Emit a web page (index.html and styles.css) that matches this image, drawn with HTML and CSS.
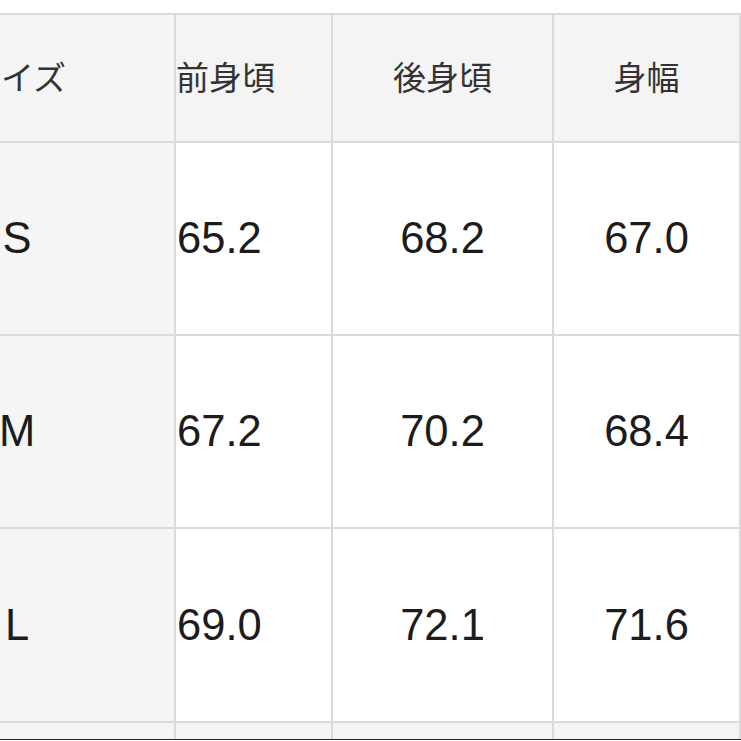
FILE: index.html
```html
<!DOCTYPE html>
<html lang="ja">
<head>
<meta charset="utf-8">
<title>サイズ表</title>
<link rel="stylesheet" href="styles.css">
</head>
<body>
<div class="frame">
  <div class="sheet">
    <div class="cell head first">サイズ</div>
    <div class="cell head left">前身頃</div>
    <div class="cell head">後身頃</div>
    <div class="cell head">身幅</div>

    <div class="cell first num">S</div>
    <div class="cell num left">65.2</div>
    <div class="cell num">68.2</div>
    <div class="cell num">67.0</div>

    <div class="cell first num">M</div>
    <div class="cell num left">67.2</div>
    <div class="cell num">70.2</div>
    <div class="cell num">68.4</div>

    <div class="cell first num">L</div>
    <div class="cell num left">69.0</div>
    <div class="cell num">72.1</div>
    <div class="cell num">71.6</div>

    <div class="cell first tail"></div>
    <div class="cell tail"></div>
    <div class="cell tail"></div>
    <div class="cell tail"></div>
  </div>
</div>
</body>
</html>
```

FILE: styles.css
```css
html, body {
  margin: 0;
  padding: 0;
  background: #ffffff;
}

.frame {
  width: 741px;
  height: 740px;
  overflow: hidden;
  border-bottom: 1px solid #2a2a2a;
  padding-top: 13px;
  box-sizing: border-box;
}

.sheet {
  display: grid;
  grid-template-columns: 314px 155px 219px 185px;
  grid-template-rows: 126px 191px 191px 192px 60px;
  gap: 2px;
  padding: 2px;
  width: max-content;
  margin-left: -142px;
  background: #dadada;
  font-family: "Liberation Sans", Arial, "Noto Sans CJK JP", sans-serif;
}

.cell {
  background: #ffffff;
  display: flex;
  align-items: center;
  justify-content: center;
  color: #1c1c1c;
}

.cell.left {
  justify-content: flex-start;
  padding-left: 1px;
}

.head {
  background: #f4f4f4;
  font-family: "Noto Sans CJK JP", sans-serif;
  font-size: 33px;
  color: #333333;
  padding-bottom: 4px;
}

.head.left {
  padding-left: 0;
}

.first {
  background: #f5f5f5;
}

.num {
  font-size: 43.5px;
}

.tail {
  background: #f4f4f5;
}
```
